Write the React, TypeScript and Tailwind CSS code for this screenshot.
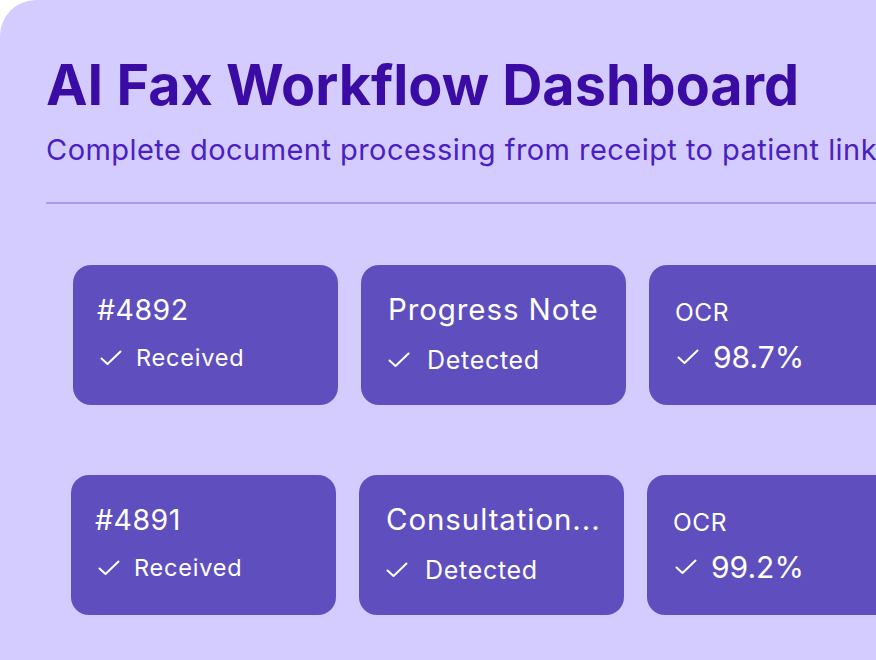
import React from "react";

function Check({ className = "" }: { className?: string }) {
  return (
    <svg width="22" height="16" viewBox="0 0 22 16" className={className} fill="none">
      <polyline points="1.5,8.5 7.5,14 20.5,1.5" stroke="white" strokeWidth="2" strokeLinecap="round" strokeLinejoin="round" />
    </svg>
  );
}

type Row = { id: string; type: string; ocr: string };

const rows: Row[] = [
  { id: "#4892", type: "Progress Note", ocr: "98.7%" },
  { id: "#4891", type: "Consultation...", ocr: "99.2%" },
];

function Card({ children }: { children: React.ReactNode }) {
  return <div className="w-[265px] h-[140px] shrink-0 rounded-[18px] bg-[#5f4fbe] text-white">{children}</div>;
}

export default function App() {
  return (
    <div className="w-[876px] h-[660px] overflow-hidden bg-white" style={{ fontFamily: "Inter, 'Noto Sans', sans-serif" }}>
      <div className="w-[1000px] h-[700px] rounded-tl-[36px] bg-[#d4ccff] pl-[46px] pt-[52px]">
        <h1 className="text-[55.7px] leading-[1.2] font-bold text-[#3a0ca3] whitespace-nowrap">AI Fax Workflow Dashboard</h1>
        <p className="mt-[14px] text-[29px] leading-[1.2] tracking-[0.45px] text-[#4a20c0] whitespace-nowrap">
          Complete document processing from receipt to patient linking
        </p>
        <div className="mt-[34px] h-[2px] bg-[#a89cf0]" />
        <div className="mt-[61px] flex flex-col gap-[70px]">
          {rows.map((r, i) => (
            <div key={r.id} className={`flex gap-[23px] ${i === 0 ? "ml-[27px]" : "ml-[25px]"}`}>
              <Card>
                <div className="pl-[24px] pt-[28px]">
                  <div className="text-[28.5px] leading-[1.2] tracking-[0.5px]">{r.id}</div>
                  <div className="mt-[17px] flex items-center text-[23.5px] leading-[1.2] tracking-[0.8px]">
                    <Check className="ml-[3px] mr-[14px]" />
                    <span>Received</span>
                  </div>
                </div>
              </Card>
              <Card>
                <div className="pl-[27px] pt-[27px]">
                  <div className="text-[29.5px] leading-[1.2] tracking-[0.9px] whitespace-nowrap">{r.type}</div>
                  <div className="mt-[18px] flex items-center text-[25px] leading-[1.2] tracking-[0.7px]">
                    <Check className="mr-[17px]" />
                    <span>Detected</span>
                  </div>
                </div>
              </Card>
              <Card>
                <div className="pl-[26px] pt-[33px]">
                  <div className="text-[24.5px] leading-[1.2] tracking-[0.5px]">OCR</div>
                  <div className="mt-[12px] flex items-center text-[30px] leading-[1.2]">
                    <Check className="ml-[2px] mr-[14px]" />
                    <span>{r.ocr}</span>
                  </div>
                </div>
              </Card>
            </div>
          ))}
        </div>
      </div>
    </div>
  );
}
